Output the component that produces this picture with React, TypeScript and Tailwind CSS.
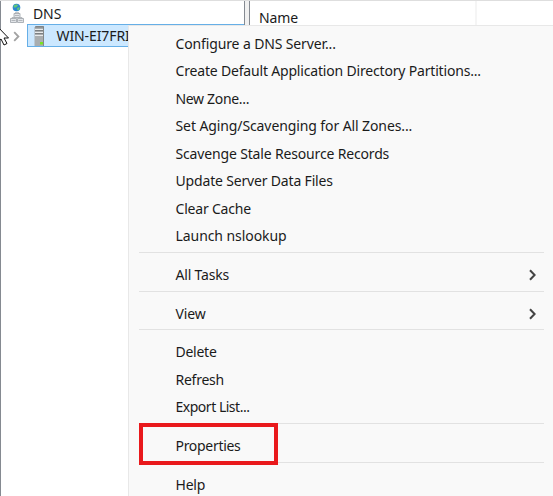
import React from "react";

type Entry = { label: string; tracking: string; submenu?: boolean; boxed?: boolean };

const groups: Entry[][] = [
  [
    { label: "Configure a DNS Server...", tracking: "tracking-[-0.13px]" },
    { label: "Create Default Application Directory Partitions...", tracking: "tracking-[-0.18px]" },
    { label: "New Zone...", tracking: "tracking-[-0.33px]" },
    { label: "Set Aging/Scavenging for All Zones...", tracking: "tracking-[-0.1px]" },
    { label: "Scavenge Stale Resource Records", tracking: "tracking-[-0.16px]" },
    { label: "Update Server Data Files", tracking: "tracking-[-0.17px]" },
    { label: "Clear Cache", tracking: "tracking-[-0.2px]" },
    { label: "Launch nslookup", tracking: "tracking-[-0.07px]" },
  ],
  [{ label: "All Tasks", tracking: "tracking-[-0.2px]", submenu: true }],
  [{ label: "View", tracking: "tracking-[-0.15px]", submenu: true }],
  [
    { label: "Delete", tracking: "tracking-[-0.25px]" },
    { label: "Refresh", tracking: "tracking-[-0.25px]" },
    { label: "Export List...", tracking: "tracking-[-0.48px]" },
  ],
  [{ label: "Properties", tracking: "tracking-[-0.3px]", boxed: true }],
  [{ label: "Help", tracking: "tracking-[-0.2px]" }],
];

function DnsIcon() {
  return (
    <svg className="h-5 w-[14px] shrink-0" viewBox="0 0 14 20">
      <circle cx="6.5" cy="4.5" r="3.8" fill="#2d86d0" />
      <path d="M4 2 7 1.2 8 2.5 6 4.5 3.5 4.5zM7 5 9.5 4 9.5 6.5 7.5 7.5z" fill="#62c878" />
      <path d="M4 10.5h6v4H4zM.5 15.5h6v4h-6zM7.5 15.5h6v4h-6z" fill="#e2e5e9" stroke="#9da2a8" strokeWidth=".8" />
      <path d="M5.5 10.5V9.4h3v1.1M2 15.5v-1h2M12 15.5v-1h-2M5 12.5h4M1.5 17.5h4M8.5 17.5h4" fill="none" stroke="#9da2a8" strokeWidth=".7" />
    </svg>
  );
}

function ServerIcon() {
  return (
    <svg className="h-[20px] w-[11px] shrink-0" viewBox="0 0 11 20">
      <path d="M1 1 2 0h7.5l.5 1v19H1z" fill="#83888a" />
      <path d="M.5 1h8.5v19H.5z" fill="#a9adaf" />
      <path d="M1 3.5h8M1 6.5h8M1 9.5h8" stroke="#e8eaeb" />
      <path d="M1 4.5h8M1 7.5h8M1 1h9" stroke="#7c8082" />
      <path d="M6 16h3v2.5H6z" fill="#78e321" />
    </svg>
  );
}

function Chevron({ className }: { className: string }) {
  return (
    <svg className={className} viewBox="0 0 7 12" fill="none" stroke="currentColor">
      <path d="M1 1.2 5.6 6 1 10.8" />
    </svg>
  );
}

function ContextMenu() {
  return (
    <div className="absolute left-32 top-[25px] h-[480px] w-[430px] border-l border-t border-[#e8e8e8] bg-[#f9f9f9] pt-[4px]">
      {groups.map((group, index) => (
        <React.Fragment key={index}>
          {index > 0 && <div className="mb-[8.2px] ml-[10px] mt-[2px] h-px w-[405px] bg-[#e2e2e2]" />}
          {group.map((entry) => (
            <div key={entry.label} className="relative flex h-[27.5px] items-center pl-[46.5px]">
              {entry.boxed && (
                <div className="absolute left-[10px] top-[-9.7px] h-[42px] w-[139px] border-4 border-[#e9191c]" />
              )}
              <span className={`whitespace-nowrap ${entry.tracking}`}>{entry.label}</span>
              {entry.submenu && (
                <Chevron className="absolute left-[400px] top-[7.8px] h-3 w-[7px] stroke-2 text-[#444]" />
              )}
            </div>
          ))}
        </React.Fragment>
      ))}
    </div>
  );
}

export default function App() {
  return (
    <div className="relative h-[496px] w-[553px] overflow-hidden bg-white font-['Noto_Sans',sans-serif] text-[14px] leading-5 text-[#1b1b1b]">
      <div className="flex h-full border-t border-[#dedede]">
        <div className="h-full w-[244px] border-l border-[#858a91]">
          <div className="flex h-[23px] items-center pl-[9px]">
            <DnsIcon />
            <span className="ml-[9px] mt-[3px] tracking-[-0.1px]">DNS</span>
          </div>
          <div className="flex h-[23px] items-center pl-[12px]">
            <Chevron className="mt-px h-[11px] w-[7px] stroke-2 text-[#a2a2a2]" />
            <div className="ml-[7px] flex h-[23px] flex-1 items-center overflow-hidden border border-[#66afe7] bg-[#cce8ff] pl-[6px]">
              <ServerIcon />
              <span className="ml-[11.5px] mt-px whitespace-nowrap tracking-[-0.1px]">WIN-EI7FRI</span>
            </div>
          </div>
        </div>
        <div className="w-[6px] border-x border-[#858a91] bg-[#f0f0f0]" />
        <div className="flex h-6 flex-1">
          <div className="w-[227px] border-r-2 border-[#f5f5f5] pl-[9px] pt-[7px] tracking-[-0.1px]">Name</div>
        </div>
      </div>
      <ContextMenu />
      <svg className="absolute left-0 top-[27px] h-[19px] w-[10px]" viewBox="0 0 10 19">
        <path d="M-4-2 8.5 11H4L7 16.5 4 18 1 12-3 15z" fill="white" stroke="#111" />
      </svg>
    </div>
  );
}
